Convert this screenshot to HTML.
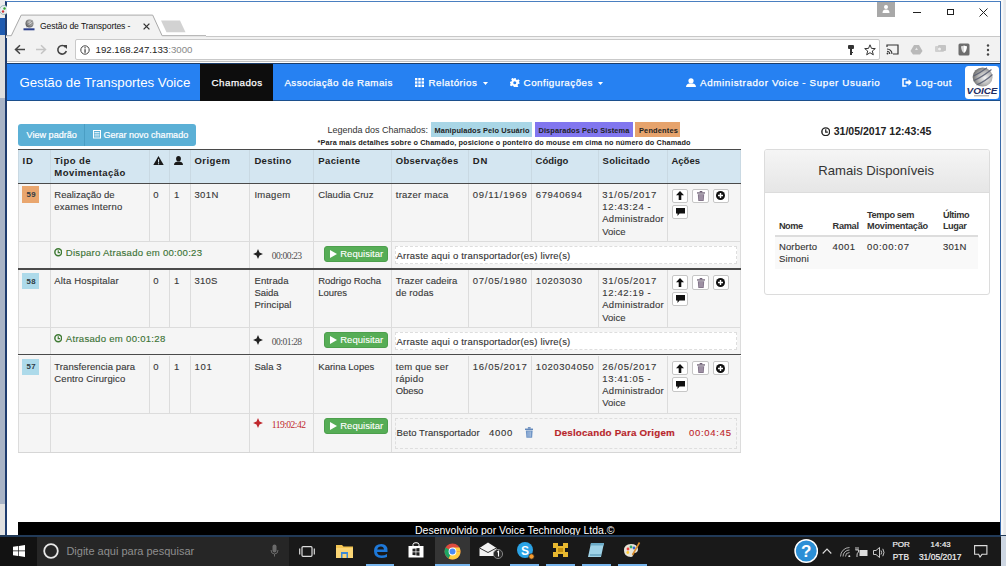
<!DOCTYPE html>
<html><head><meta charset="utf-8">
<style>
*{margin:0;padding:0;box-sizing:border-box}
html,body{width:1006px;height:566px;overflow:hidden;background:#fff;font-family:"Liberation Sans",sans-serif;position:relative}
.a{position:absolute}
.t{position:absolute;white-space:nowrap;line-height:1}
/* desktop strips */
#deskr{left:1001px;top:0;width:5px;height:536px;background:#eceef0;border-left:2px solid #f8f8f8;border-right:2px solid #e6e8ea}
/* window */
#win{left:5px;top:1px;width:996px;height:535px;background:#fff;border:1px solid #4a7fc0;border-left:2px solid #1f3c6e;border-right:1.5px solid #3a6aa8;border-bottom:none}
#tabbar{left:7px;top:2px;width:993px;height:34px;background:#fff}
#toolbar{left:7px;top:36px;width:993px;height:26px;background:#f2f2f2;border-top:1px solid #c8c8c8;border-bottom:1px solid #c0c0c0}
#addr{left:75px;top:39px;width:805px;height:21px;background:#fff;border:1px solid #c9c9c9;border-radius:2px}
/* nav */
#nav{left:7px;top:63px;width:993px;height:38px;background:#2681f2;border-top:1px solid #1b3d6a;border-bottom:1px solid #1c4f8c}
/* content */
/* footer */
#foot{left:18px;top:521.7px;width:982px;height:14px;background:#000}
</style></head><body>
<div class="a" style="left:0;top:0;width:6px;height:18.3px;background:#ececec"></div>
<div class="a" style="left:0;top:18.3px;width:6px;height:16.4px;background:#1f5bb0"></div>
<div class="a" style="left:0;top:34.7px;width:6px;height:63.6px;background:#dedede"></div>
<div class="a" style="left:0;top:98.3px;width:6px;height:405.7px;background:#a9b4c6"></div>
<div class="a" style="left:0;top:504px;width:6px;height:32px;background:#e0e0e0"></div>
<div class="a" id="deskr"></div>
<div class="a" id="win"></div>
<div class="a" id="tabbar"></div>
<div class="a" id="toolbar"></div>
<div class="a" id="addr"></div>

<!-- tab -->
<svg class="a" style="left:6px;top:14px" width="200" height="24" viewBox="0 0 200 24">
<path d="M0 21.7 L5.3 21.7 L15.2 1.1 L146.7 1.1 L156.1 21.7 L200 21.7 L200 24 L0 24 Z" fill="#f2f2f2"/>
<path d="M0 21.7 L5.3 21.7 L15.2 1.1 L146.7 1.1 L156.1 21.7 L200 21.7" fill="none" stroke="#a9a9a9" stroke-width="1"/>
<path d="M155 6.4 L174 6.4 L179.5 18.3 L160.5 18.3 Z" fill="#d2d2d2"/>
</svg>
<svg class="a" style="left:22px;top:19px" width="14" height="13" viewBox="0 0 14 13">
<defs><radialGradient id="fav" cx="0.6" cy="0.4" r="0.7"><stop offset="0" stop-color="#e8e8e8"/><stop offset="0.5" stop-color="#9a9a9a"/><stop offset="1" stop-color="#404040"/></radialGradient></defs>
<circle cx="7.5" cy="4.6" r="4" fill="url(#fav)"/><path d="M4 6 Q7.5 4.5 10.5 1.8 M4.5 8 Q8 6.5 11 3.8" stroke="#666" stroke-width="0.6" fill="none"/>
<rect x="1.5" y="9.3" width="11" height="2" fill="#2b3f8a"/>
</svg>
<div class="t" style="left:40px;top:22.2px;font-size:8.6px;color:#111;letter-spacing:-0.1px">Gestão de Transportes -</div>
<svg class="a" style="left:142.7px;top:22.8px" width="7" height="7" viewBox="0 0 7 7"><path d="M0.6 0.6 L6.4 6.4 M6.4 0.6 L0.6 6.4" stroke="#333" stroke-width="1.3"/></svg>
<!-- profile + window controls -->
<div class="a" style="left:877px;top:2px;width:17.5px;height:14.5px;background:#a8a8a8"></div>
<svg class="a" style="left:881px;top:4px" width="10" height="10" viewBox="0 0 10 10"><circle cx="5" cy="3" r="2" fill="#fff"/><path d="M1.5 9 Q1.5 5.6 5 5.6 Q8.5 5.6 8.5 9Z" fill="#fff"/></svg>
<div class="a" style="left:913px;top:12px;width:7.5px;height:1px;background:#222"></div>
<div class="a" style="left:946.5px;top:8.7px;width:7.2px;height:6.8px;border:1px solid #222"></div>
<svg class="a" style="left:979px;top:8px" width="9" height="9" viewBox="0 0 9 9"><path d="M0.5 0.5 L8.5 8.5 M8.5 0.5 L0.5 8.5" stroke="#222" stroke-width="1"/></svg>
<!-- toolbar icons -->
<svg class="a" style="left:14px;top:44px" width="12" height="11" viewBox="0 0 12 11"><path d="M11 5.5 H2 M6 1.2 L1.5 5.5 L6 9.8" stroke="#444" stroke-width="1.5" fill="none"/></svg>
<svg class="a" style="left:35px;top:44px" width="12" height="11" viewBox="0 0 12 11"><path d="M1 5.5 H10 M6 1.2 L10.5 5.5 L6 9.8" stroke="#c4c4c4" stroke-width="1.5" fill="none"/></svg>
<svg class="a" style="left:56px;top:44px" width="12" height="12" viewBox="0 0 12 12"><path d="M9.6 3.2 A4.3 4.3 0 1 0 10.3 7" stroke="#444" stroke-width="1.6" fill="none"/><path d="M7 1 L11 1 L11 5 Z" fill="#444"/></svg>
<svg class="a" style="left:80px;top:44.5px" width="10" height="10" viewBox="0 0 10 10"><circle cx="5" cy="5" r="4.2" stroke="#444" stroke-width="1" fill="none"/><rect x="4.4" y="4.2" width="1.3" height="3.6" fill="#444"/><rect x="4.4" y="2.2" width="1.3" height="1.2" fill="#444"/></svg>
<div class="t" style="left:95.5px;top:45px;font-size:9.7px;color:#222">192.168.247.133<span style="color:#888">:3000</span></div>
<svg class="a" style="left:846px;top:44px" width="10" height="12" viewBox="0 0 10 12"><rect x="2" y="1" width="6" height="4" rx="1" fill="#333"/><rect x="4" y="5" width="2" height="6" fill="#333"/><rect x="5" y="8" width="2" height="1" fill="#333"/></svg>
<svg class="a" style="left:864px;top:44px" width="12" height="12" viewBox="0 0 12 12"><path d="M6 0.8 L7.5 4.4 L11.3 4.6 L8.3 7 L9.3 10.8 L6 8.7 L2.7 10.8 L3.7 7 L0.7 4.6 L4.5 4.4 Z" stroke="#333" stroke-width="1" fill="none"/></svg>
<svg class="a" style="left:886px;top:44px" width="13" height="11" viewBox="0 0 13 11"><path d="M1 3 V1 H12 V10 H7" stroke="#333" stroke-width="1.2" fill="none"/><path d="M1 5 A5 5 0 0 1 6 10 M1 7.2 A2.8 2.8 0 0 1 3.8 10" stroke="#333" stroke-width="1.1" fill="none"/><circle cx="1.5" cy="9.5" r="0.9" fill="#333"/></svg>
<svg class="a" style="left:910px;top:44px" width="13" height="11" viewBox="0 0 13 11"><path d="M4 1 H9 L12.5 7 L10 10.5 H3 L0.5 7 Z" fill="#b9b9b9"/><path d="M5 6 L6.5 3.5 L8 6Z" fill="#e6e6e6"/></svg>
<svg class="a" style="left:934px;top:44px" width="13" height="11" viewBox="0 0 13 11"><rect x="1" y="2" width="9" height="6" rx="1" fill="#d0d0d0"/><rect x="4" y="1" width="8" height="6" rx="1" fill="#c4c4c4"/><circle cx="5.5" cy="5" r="1.5" fill="#f0f0f0"/></svg>
<svg class="a" style="left:958px;top:43px" width="12" height="13" viewBox="0 0 12 13"><rect x="0.5" y="0.5" width="11" height="12" rx="1.5" fill="#6d6d6d"/><path d="M6 2.5 Q8 3.5 9 3.2 Q9 8 6 10 Z" fill="#fff"/><path d="M6 2.5 Q4 3.5 3 3.2 Q3 8 6 10 Z" fill="#ddd"/></svg>
<svg class="a" style="left:986px;top:44px" width="4" height="12" viewBox="0 0 4 12"><circle cx="2" cy="1.5" r="1.2" fill="#444"/><circle cx="2" cy="6" r="1.2" fill="#444"/><circle cx="2" cy="10.5" r="1.2" fill="#444"/></svg>
<!-- desktop icon -->
<svg class="a" style="left:0;top:4px" width="7" height="12" viewBox="0 0 7 12"><circle cx="4" cy="6" r="4.5" fill="#e8eef0" stroke="#8aa" stroke-width="0.8"/><circle cx="4.5" cy="4.5" r="1.2" fill="#3a3"/><circle cx="3" cy="7.5" r="1.2" fill="#c33"/></svg>
<div class="a" id="nav"></div>

<div class="t" style="left:19.40px;top:76.08px;font-size:13.26px;color:#fff;font-weight:normal;font-family:'Liberation Sans',sans-serif;">Gestão de Transportes Voice</div>
<div class="a" style="left:200.30px;top:64.00px;width:72.50px;height:37.00px;background:#0d0d0d;"></div>
<div class="t" style="left:211.60px;top:78.30px;font-size:9.80px;color:#fff;font-weight:normal;font-family:'Liberation Sans',sans-serif;letter-spacing:0.444px;-webkit-text-stroke:0.25px #fff;">Chamados</div>
<div class="t" style="left:284.40px;top:78.30px;font-size:9.80px;color:#fff;font-weight:normal;font-family:'Liberation Sans',sans-serif;letter-spacing:0.438px;-webkit-text-stroke:0.25px #fff;">Associação de Ramais</div>
<svg class="a" style="left:415px;top:78.3px" width="9" height="9" viewBox="0 0 9 9" fill="#fff"><rect x="0" y="0" width="2.4" height="2.4"/><rect x="3.3" y="0" width="2.4" height="2.4"/><rect x="6.6" y="0" width="2.4" height="2.4"/><rect x="0" y="3.3" width="2.4" height="2.4"/><rect x="3.3" y="3.3" width="2.4" height="2.4"/><rect x="6.6" y="3.3" width="2.4" height="2.4"/><rect x="0" y="6.6" width="2.4" height="2.4"/><rect x="3.3" y="6.6" width="2.4" height="2.4"/><rect x="6.6" y="6.6" width="2.4" height="2.4"/></svg>
<div class="t" style="left:428.50px;top:78.30px;font-size:9.80px;color:#fff;font-weight:normal;font-family:'Liberation Sans',sans-serif;letter-spacing:0.465px;-webkit-text-stroke:0.25px #fff;">Relatórios</div>
<svg class="a" style="left:483px;top:81.8px" width="5" height="3" viewBox="0 0 5 3"><path d="M0 0H5L2.5 3Z" fill="#fff"/></svg>
<svg class="a" style="left:510.4px;top:77.8px" width="9.5" height="9.5" viewBox="0 0 10 10"><path fill="#fff" d="M4 0h2l.3 1.5 1.2.6 1.3-.9 1.4 1.4-.9 1.3.6 1.2L10 4v2l-1.5.3-.6 1.2.9 1.3-1.4 1.4-1.3-.9-1.2.6L6 10H4l-.3-1.5-1.2-.6-1.3.9L-.2 7.4l.9-1.3-.6-1.2L0 6V4l1.5-.3.6-1.2-.9-1.3L2.6-.2l1.3.9 1.2-.6Z"/><circle cx="5" cy="5" r="1.6" fill="#2681f2"/></svg>
<div class="t" style="left:523.60px;top:78.30px;font-size:9.80px;color:#fff;font-weight:normal;font-family:'Liberation Sans',sans-serif;letter-spacing:0.467px;-webkit-text-stroke:0.25px #fff;">Configurações</div>
<svg class="a" style="left:598px;top:81.8px" width="5" height="3" viewBox="0 0 5 3"><path d="M0 0H5L2.5 3Z" fill="#fff"/></svg>
<svg class="a" style="left:686.4px;top:77.6px" width="10" height="9.5" viewBox="0 0 10 9.5"><circle cx="5" cy="2.8" r="2.6" fill="#fff"/><path d="M0 9.5 Q0 5.8 3.5 5.6 L6.5 5.6 Q10 5.8 10 9.5Z" fill="#fff"/></svg>
<div class="t" style="left:700.00px;top:78.30px;font-size:9.80px;color:#fff;font-weight:normal;font-family:'Liberation Sans',sans-serif;letter-spacing:0.626px;-webkit-text-stroke:0.25px #fff;">Administrador Voice - Super Usuario</div>
<svg class="a" style="left:902px;top:78.2px" width="10" height="9" viewBox="0 0 10 9"><path d="M4.5 1 H1 V8 H4.5" stroke="#fff" stroke-width="1.6" fill="none"/><path d="M3.5 3.3 H6.5 V1.2 L9.8 4.5 L6.5 7.8 V5.7 H3.5Z" fill="#fff"/></svg>
<div class="t" style="left:915.40px;top:78.30px;font-size:9.80px;color:#fff;font-weight:normal;font-family:'Liberation Sans',sans-serif;letter-spacing:0.477px;-webkit-text-stroke:0.25px #fff;">Log-out</div>
<div class="a" style="left:964.6px;top:65.9px;width:34px;height:33.5px;background:#fff;border-radius:3.5px"></div>
<svg class="a" style="left:964.6px;top:65.9px" width="34" height="33.5" viewBox="0 0 34 33.5">
<defs><radialGradient id="sph" cx="0.62" cy="0.55" r="0.75"><stop offset="0" stop-color="#f4f4f4"/><stop offset="0.45" stop-color="#b8b8b8"/><stop offset="1" stop-color="#4a4a4a"/></radialGradient></defs>
<ellipse cx="17.6" cy="11" rx="10" ry="9.6" fill="url(#sph)"/>
<path d="M9 14.5 Q17 11 26.5 3.5 M8.6 10 Q15 7 22 1.8 M11.5 19 Q20 15.5 27.5 8.5" stroke="#555a70" stroke-width="1.2" fill="none" opacity="0.85"/>
<text x="17" y="28.2" text-anchor="middle" font-family="Liberation Sans" font-weight="bold" font-style="italic" font-size="9.4" fill="#1c2b63" textLength="31" lengthAdjust="spacingAndGlyphs">VOICE</text>
<rect x="9" y="29.3" width="15" height="1" fill="#9a9a9a"/>
</svg>
<div class="a" style="left:18.00px;top:124.00px;width:178.00px;height:21.70px;background:#5bb0d6;border-radius:3px"></div>
<div class="a" style="left:84.20px;top:124.00px;width:1.00px;height:21.70px;background:#4a9ec4;"></div>
<div class="t" style="left:26.50px;top:130.50px;font-size:9.10px;color:#fff;font-weight:normal;font-family:'Liberation Sans',sans-serif;-webkit-text-stroke:0.2px #fff;">View padrão</div>
<svg class="a" style="left:93px;top:130px" width="8" height="8.5" viewBox="0 0 8 8.5"><rect x="0.5" y="0.5" width="7" height="7.5" fill="none" stroke="#fff" stroke-width="1"/><path d="M1.5 2.5H6.5M1.5 4.2H6.5M1.5 5.9H6.5" stroke="#fff" stroke-width="0.8"/></svg>
<div class="t" style="left:103.60px;top:130.58px;font-size:9.00px;color:#fff;font-weight:normal;font-family:'Liberation Sans',sans-serif;-webkit-text-stroke:0.2px #fff;">Gerar novo chamado</div>
<div class="t" style="left:327.50px;top:125.68px;font-size:9.00px;color:#333;font-weight:normal;font-family:'Liberation Sans',sans-serif;">Legenda dos Chamados:</div>
<div class="a" style="left:430.90px;top:122.20px;width:100.90px;height:15.20px;background:#a9d6e6;"></div>
<div class="a" style="left:534.80px;top:122.20px;width:98.00px;height:15.20px;background:#8176ef;"></div>
<div class="a" style="left:635.20px;top:122.20px;width:45.30px;height:15.20px;background:#e6a36c;"></div>
<div class="t" style="left:434.50px;top:127.14px;font-size:7.40px;color:#222;font-weight:bold;font-family:'Liberation Sans',sans-serif;letter-spacing:0.110px;">Manipulados Pelo Usuário</div>
<div class="t" style="left:538.50px;top:127.14px;font-size:7.40px;color:#222;font-weight:bold;font-family:'Liberation Sans',sans-serif;letter-spacing:0.115px;">Disparados Pelo Sistema</div>
<div class="t" style="left:639.00px;top:127.14px;font-size:7.40px;color:#222;font-weight:bold;font-family:'Liberation Sans',sans-serif;letter-spacing:0.181px;">Pendentes</div>
<div class="t" style="left:317.60px;top:139.42px;font-size:7.30px;color:#222;font-weight:bold;font-family:'Liberation Sans',sans-serif;letter-spacing:0.115px;">*Para mais detalhes sobre o Chamado, posicione o ponteiro do mouse em cima no número do Chamado</div>
<div class="a" style="left:18.00px;top:149.00px;width:722.30px;height:33.80px;background:#d4e6f1;"></div>
<div class="a" style="left:18.00px;top:182.80px;width:722.30px;height:269.60px;background:#f5f5f5;"></div>
<div class="a" style="left:17.50px;top:149.00px;width:1.00px;height:33.80px;background:#c9d9e3;"></div>
<div class="a" style="left:49.50px;top:149.00px;width:1.00px;height:33.80px;background:#c9d9e3;"></div>
<div class="a" style="left:148.80px;top:149.00px;width:1.00px;height:33.80px;background:#c9d9e3;"></div>
<div class="a" style="left:168.80px;top:149.00px;width:1.00px;height:33.80px;background:#c9d9e3;"></div>
<div class="a" style="left:190.00px;top:149.00px;width:1.00px;height:33.80px;background:#c9d9e3;"></div>
<div class="a" style="left:249.00px;top:149.00px;width:1.00px;height:33.80px;background:#c9d9e3;"></div>
<div class="a" style="left:312.90px;top:149.00px;width:1.00px;height:33.80px;background:#c9d9e3;"></div>
<div class="a" style="left:391.10px;top:149.00px;width:1.00px;height:33.80px;background:#c9d9e3;"></div>
<div class="a" style="left:468.20px;top:149.00px;width:1.00px;height:33.80px;background:#c9d9e3;"></div>
<div class="a" style="left:531.30px;top:149.00px;width:1.00px;height:33.80px;background:#c9d9e3;"></div>
<div class="a" style="left:597.50px;top:149.00px;width:1.00px;height:33.80px;background:#c9d9e3;"></div>
<div class="a" style="left:667.10px;top:149.00px;width:1.00px;height:33.80px;background:#c9d9e3;"></div>
<div class="a" style="left:739.80px;top:149.00px;width:1.00px;height:33.80px;background:#c9d9e3;"></div>
<div class="a" style="left:17.50px;top:183.50px;width:1.00px;height:58.20px;background:#dcdcdc;"></div>
<div class="a" style="left:49.50px;top:183.50px;width:1.00px;height:58.20px;background:#dcdcdc;"></div>
<div class="a" style="left:148.80px;top:183.50px;width:1.00px;height:58.20px;background:#dcdcdc;"></div>
<div class="a" style="left:168.80px;top:183.50px;width:1.00px;height:58.20px;background:#dcdcdc;"></div>
<div class="a" style="left:190.00px;top:183.50px;width:1.00px;height:58.20px;background:#dcdcdc;"></div>
<div class="a" style="left:249.00px;top:183.50px;width:1.00px;height:58.20px;background:#dcdcdc;"></div>
<div class="a" style="left:312.90px;top:183.50px;width:1.00px;height:58.20px;background:#dcdcdc;"></div>
<div class="a" style="left:391.10px;top:183.50px;width:1.00px;height:58.20px;background:#dcdcdc;"></div>
<div class="a" style="left:468.20px;top:183.50px;width:1.00px;height:58.20px;background:#dcdcdc;"></div>
<div class="a" style="left:531.30px;top:183.50px;width:1.00px;height:58.20px;background:#dcdcdc;"></div>
<div class="a" style="left:597.50px;top:183.50px;width:1.00px;height:58.20px;background:#dcdcdc;"></div>
<div class="a" style="left:667.10px;top:183.50px;width:1.00px;height:58.20px;background:#dcdcdc;"></div>
<div class="a" style="left:739.80px;top:183.50px;width:1.00px;height:58.20px;background:#dcdcdc;"></div>
<div class="a" style="left:17.50px;top:241.70px;width:1.00px;height:27.10px;background:#dcdcdc;"></div>
<div class="a" style="left:49.50px;top:241.70px;width:1.00px;height:27.10px;background:#dcdcdc;"></div>
<div class="a" style="left:249.00px;top:241.70px;width:1.00px;height:27.10px;background:#dcdcdc;"></div>
<div class="a" style="left:312.90px;top:241.70px;width:1.00px;height:27.10px;background:#dcdcdc;"></div>
<div class="a" style="left:391.10px;top:241.70px;width:1.00px;height:27.10px;background:#dcdcdc;"></div>
<div class="a" style="left:739.80px;top:241.70px;width:1.00px;height:27.10px;background:#dcdcdc;"></div>
<div class="a" style="left:18.00px;top:241.20px;width:722.30px;height:1.00px;background:#dcdcdc;"></div>
<div class="a" style="left:17.50px;top:270.30px;width:1.00px;height:57.40px;background:#dcdcdc;"></div>
<div class="a" style="left:49.50px;top:270.30px;width:1.00px;height:57.40px;background:#dcdcdc;"></div>
<div class="a" style="left:148.80px;top:270.30px;width:1.00px;height:57.40px;background:#dcdcdc;"></div>
<div class="a" style="left:168.80px;top:270.30px;width:1.00px;height:57.40px;background:#dcdcdc;"></div>
<div class="a" style="left:190.00px;top:270.30px;width:1.00px;height:57.40px;background:#dcdcdc;"></div>
<div class="a" style="left:249.00px;top:270.30px;width:1.00px;height:57.40px;background:#dcdcdc;"></div>
<div class="a" style="left:312.90px;top:270.30px;width:1.00px;height:57.40px;background:#dcdcdc;"></div>
<div class="a" style="left:391.10px;top:270.30px;width:1.00px;height:57.40px;background:#dcdcdc;"></div>
<div class="a" style="left:468.20px;top:270.30px;width:1.00px;height:57.40px;background:#dcdcdc;"></div>
<div class="a" style="left:531.30px;top:270.30px;width:1.00px;height:57.40px;background:#dcdcdc;"></div>
<div class="a" style="left:597.50px;top:270.30px;width:1.00px;height:57.40px;background:#dcdcdc;"></div>
<div class="a" style="left:667.10px;top:270.30px;width:1.00px;height:57.40px;background:#dcdcdc;"></div>
<div class="a" style="left:739.80px;top:270.30px;width:1.00px;height:57.40px;background:#dcdcdc;"></div>
<div class="a" style="left:17.50px;top:327.70px;width:1.00px;height:26.60px;background:#dcdcdc;"></div>
<div class="a" style="left:49.50px;top:327.70px;width:1.00px;height:26.60px;background:#dcdcdc;"></div>
<div class="a" style="left:249.00px;top:327.70px;width:1.00px;height:26.60px;background:#dcdcdc;"></div>
<div class="a" style="left:312.90px;top:327.70px;width:1.00px;height:26.60px;background:#dcdcdc;"></div>
<div class="a" style="left:391.10px;top:327.70px;width:1.00px;height:26.60px;background:#dcdcdc;"></div>
<div class="a" style="left:739.80px;top:327.70px;width:1.00px;height:26.60px;background:#dcdcdc;"></div>
<div class="a" style="left:18.00px;top:327.20px;width:722.30px;height:1.00px;background:#dcdcdc;"></div>
<div class="a" style="left:17.50px;top:355.80px;width:1.00px;height:57.80px;background:#dcdcdc;"></div>
<div class="a" style="left:49.50px;top:355.80px;width:1.00px;height:57.80px;background:#dcdcdc;"></div>
<div class="a" style="left:148.80px;top:355.80px;width:1.00px;height:57.80px;background:#dcdcdc;"></div>
<div class="a" style="left:168.80px;top:355.80px;width:1.00px;height:57.80px;background:#dcdcdc;"></div>
<div class="a" style="left:190.00px;top:355.80px;width:1.00px;height:57.80px;background:#dcdcdc;"></div>
<div class="a" style="left:249.00px;top:355.80px;width:1.00px;height:57.80px;background:#dcdcdc;"></div>
<div class="a" style="left:312.90px;top:355.80px;width:1.00px;height:57.80px;background:#dcdcdc;"></div>
<div class="a" style="left:391.10px;top:355.80px;width:1.00px;height:57.80px;background:#dcdcdc;"></div>
<div class="a" style="left:468.20px;top:355.80px;width:1.00px;height:57.80px;background:#dcdcdc;"></div>
<div class="a" style="left:531.30px;top:355.80px;width:1.00px;height:57.80px;background:#dcdcdc;"></div>
<div class="a" style="left:597.50px;top:355.80px;width:1.00px;height:57.80px;background:#dcdcdc;"></div>
<div class="a" style="left:667.10px;top:355.80px;width:1.00px;height:57.80px;background:#dcdcdc;"></div>
<div class="a" style="left:739.80px;top:355.80px;width:1.00px;height:57.80px;background:#dcdcdc;"></div>
<div class="a" style="left:17.50px;top:413.60px;width:1.00px;height:38.80px;background:#dcdcdc;"></div>
<div class="a" style="left:49.50px;top:413.60px;width:1.00px;height:38.80px;background:#dcdcdc;"></div>
<div class="a" style="left:249.00px;top:413.60px;width:1.00px;height:38.80px;background:#dcdcdc;"></div>
<div class="a" style="left:312.90px;top:413.60px;width:1.00px;height:38.80px;background:#dcdcdc;"></div>
<div class="a" style="left:391.10px;top:413.60px;width:1.00px;height:38.80px;background:#dcdcdc;"></div>
<div class="a" style="left:739.80px;top:413.60px;width:1.00px;height:38.80px;background:#dcdcdc;"></div>
<div class="a" style="left:18.00px;top:413.10px;width:722.30px;height:1.00px;background:#dcdcdc;"></div>
<div class="a" style="left:18.00px;top:451.90px;width:722.80px;height:1.00px;background:#d6d6d6;"></div>
<div class="a" style="left:18.00px;top:148.70px;width:722.80px;height:1.60px;background:#4a4a4a;"></div>
<div class="a" style="left:18.00px;top:182.60px;width:722.80px;height:1.60px;background:#4a4a4a;"></div>
<div class="a" style="left:18.00px;top:268.10px;width:722.80px;height:1.60px;background:#4a4a4a;"></div>
<div class="a" style="left:18.00px;top:353.60px;width:722.80px;height:1.60px;background:#4a4a4a;"></div>
<div class="t" style="left:22.50px;top:156.36px;font-size:9.50px;color:#222;font-weight:bold;font-family:'Liberation Sans',sans-serif;letter-spacing:0.959px;">ID</div>
<div class="t" style="left:54.30px;top:156.36px;font-size:9.50px;color:#222;font-weight:bold;font-family:'Liberation Sans',sans-serif;letter-spacing:0.446px;">Tipo de</div>
<div class="t" style="left:54.30px;top:168.06px;font-size:9.50px;color:#222;font-weight:bold;font-family:'Liberation Sans',sans-serif;letter-spacing:0.455px;">Movimentação</div>
<div class="t" style="left:194.40px;top:156.36px;font-size:9.50px;color:#222;font-weight:bold;font-family:'Liberation Sans',sans-serif;letter-spacing:0.468px;">Origem</div>
<div class="t" style="left:254.40px;top:156.36px;font-size:9.50px;color:#222;font-weight:bold;font-family:'Liberation Sans',sans-serif;letter-spacing:0.327px;">Destino</div>
<div class="t" style="left:318.30px;top:156.36px;font-size:9.50px;color:#222;font-weight:bold;font-family:'Liberation Sans',sans-serif;letter-spacing:0.375px;">Paciente</div>
<div class="t" style="left:395.80px;top:156.36px;font-size:9.50px;color:#222;font-weight:bold;font-family:'Liberation Sans',sans-serif;letter-spacing:0.272px;">Observações</div>
<div class="t" style="left:472.80px;top:156.36px;font-size:9.50px;color:#222;font-weight:bold;font-family:'Liberation Sans',sans-serif;letter-spacing:0.782px;">DN</div>
<div class="t" style="left:535.50px;top:156.36px;font-size:9.50px;color:#222;font-weight:bold;font-family:'Liberation Sans',sans-serif;letter-spacing:0.018px;">Código</div>
<div class="t" style="left:602.60px;top:156.36px;font-size:9.50px;color:#222;font-weight:bold;font-family:'Liberation Sans',sans-serif;letter-spacing:0.201px;">Solicitado</div>
<div class="t" style="left:671.40px;top:156.36px;font-size:9.50px;color:#222;font-weight:bold;font-family:'Liberation Sans',sans-serif;letter-spacing:0.021px;">Ações</div>
<svg class="a" style="left:153px;top:155.5px" width="11" height="9.5" viewBox="0 0 11 9.5"><path d="M5.5 0 L11 9.5 H0 Z" fill="#1a1a1a"/><rect x="5" y="3.2" width="1.1" height="3.3" fill="#d4e6f1"/><rect x="5" y="7.2" width="1.1" height="1.1" fill="#d4e6f1"/></svg>
<svg class="a" style="left:174px;top:155.5px" width="9" height="9.5" viewBox="0 0 9 9.5"><ellipse cx="4.5" cy="2.8" rx="2.4" ry="2.8" fill="#1a1a1a"/><path d="M0 9.5 Q0 6 3 5.8 H6 Q9 6 9 9.5Z" fill="#1a1a1a"/></svg>
<div class="a" style="left:22.20px;top:186.40px;width:16.70px;height:16.20px;background:#e9a66e;"></div>
<div class="t" style="left:26.40px;top:190.80px;font-size:7.80px;color:#2e3a44;font-weight:bold;font-family:'Liberation Sans',sans-serif;letter-spacing:0.508px;">59</div>
<div class="t" style="left:54.30px;top:189.96px;font-size:9.50px;color:#383838;font-weight:normal;font-family:'Liberation Sans',sans-serif;letter-spacing:-0.005px;-webkit-text-stroke:0.12px #383838;">Realização de</div>
<div class="t" style="left:54.30px;top:202.21px;font-size:9.50px;color:#383838;font-weight:normal;font-family:'Liberation Sans',sans-serif;letter-spacing:0.187px;-webkit-text-stroke:0.12px #383838;">exames Interno</div>
<div class="t" style="left:153.30px;top:189.96px;font-size:9.50px;color:#383838;font-weight:normal;font-family:'Liberation Sans',sans-serif;letter-spacing:0.000px;-webkit-text-stroke:0.12px #383838;">0</div>
<div class="t" style="left:174.00px;top:189.96px;font-size:9.50px;color:#383838;font-weight:normal;font-family:'Liberation Sans',sans-serif;letter-spacing:0.000px;-webkit-text-stroke:0.12px #383838;">1</div>
<div class="t" style="left:194.40px;top:189.96px;font-size:9.50px;color:#383838;font-weight:normal;font-family:'Liberation Sans',sans-serif;letter-spacing:0.384px;-webkit-text-stroke:0.12px #383838;">301N</div>
<div class="t" style="left:254.40px;top:189.96px;font-size:9.50px;color:#383838;font-weight:normal;font-family:'Liberation Sans',sans-serif;letter-spacing:0.281px;-webkit-text-stroke:0.12px #383838;">Imagem</div>
<div class="t" style="left:318.30px;top:189.96px;font-size:9.50px;color:#383838;font-weight:normal;font-family:'Liberation Sans',sans-serif;letter-spacing:0.018px;-webkit-text-stroke:0.12px #383838;">Claudia Cruz</div>
<div class="t" style="left:395.80px;top:189.96px;font-size:9.50px;color:#383838;font-weight:normal;font-family:'Liberation Sans',sans-serif;letter-spacing:0.235px;-webkit-text-stroke:0.12px #383838;">trazer maca</div>
<div class="t" style="left:472.80px;top:189.96px;font-size:9.50px;color:#383838;font-weight:normal;font-family:'Liberation Sans',sans-serif;letter-spacing:0.789px;-webkit-text-stroke:0.12px #383838;">09/11/1969</div>
<div class="t" style="left:535.80px;top:189.96px;font-size:9.50px;color:#383838;font-weight:normal;font-family:'Liberation Sans',sans-serif;letter-spacing:0.573px;-webkit-text-stroke:0.12px #383838;">67940694</div>
<div class="t" style="left:602.30px;top:189.96px;font-size:9.50px;color:#383838;font-weight:normal;font-family:'Liberation Sans',sans-serif;letter-spacing:0.711px;-webkit-text-stroke:0.12px #383838;">31/05/2017</div>
<div class="t" style="left:602.30px;top:202.21px;font-size:9.50px;color:#383838;font-weight:normal;font-family:'Liberation Sans',sans-serif;letter-spacing:0.633px;-webkit-text-stroke:0.12px #383838;">12:43:24 -</div>
<div class="t" style="left:602.30px;top:214.46px;font-size:9.50px;color:#383838;font-weight:normal;font-family:'Liberation Sans',sans-serif;letter-spacing:0.234px;-webkit-text-stroke:0.12px #383838;">Administrador</div>
<div class="t" style="left:602.30px;top:226.71px;font-size:9.50px;color:#383838;font-weight:normal;font-family:'Liberation Sans',sans-serif;letter-spacing:-0.022px;-webkit-text-stroke:0.12px #383838;">Voice</div>
<div class="a" style="left:671.70px;top:188.50px;width:16.70px;height:14.60px;background:#fff;border:1px solid #c6c6c6;border-radius:2px;box-sizing:border-box"></div>
<svg class="a" style="left:676.05px;top:191.30px" width="8" height="9" viewBox="0 0 8 9"><path d="M4 0 L8 4.2 H5.3 V9 H2.7 V4.2 H0 Z" fill="#111"/></svg>
<div class="a" style="left:692.30px;top:188.50px;width:16.70px;height:14.60px;background:#fff;border:1px solid #c6c6c6;border-radius:2px;box-sizing:border-box"></div>
<svg class="a" style="left:696.65px;top:190.80px" width="8" height="10" viewBox="0 0 8 10"><rect x="0" y="1.3" width="8" height="1.3" fill="#6e6075"/><rect x="2.7" y="0" width="2.6" height="1.3" fill="#6e6075"/><path d="M0.8 3.2 H7.2 L6.7 10 H1.3 Z" fill="#85778c"/><path d="M2.8 4 V9 M4 4 V9 M5.2 4 V9" stroke="#c9bfcc" stroke-width="0.5"/></svg>
<div class="a" style="left:712.50px;top:188.50px;width:16.70px;height:14.60px;background:#fff;border:1px solid #c6c6c6;border-radius:2px;box-sizing:border-box"></div>
<svg class="a" style="left:716.35px;top:191.30px" width="9" height="9" viewBox="0 0 9 9"><circle cx="4.5" cy="4.5" r="4.5" fill="#111"/><path d="M4.5 2 V7 M2 4.5 H7" stroke="#fff" stroke-width="1.4"/></svg>
<div class="a" style="left:671.70px;top:204.90px;width:16.70px;height:14.60px;background:#fff;border:1px solid #c6c6c6;border-radius:2px;box-sizing:border-box"></div>
<svg class="a" style="left:675.55px;top:208.20px" width="9" height="8" viewBox="0 0 9 8"><path d="M0 0 H9 V5.5 H3.5 L1.5 8 V5.5 H0 Z" fill="#111"/></svg>
<svg class="a" style="left:53.9px;top:248.20px" width="8.5" height="8.5" viewBox="0 0 8 8"><circle cx="4" cy="4" r="3.2" fill="none" stroke="#3f7a34" stroke-width="1.4"/><path d="M4 2 V4.3 H5.8" stroke="#3f7a34" stroke-width="1.1" fill="none"/></svg>
<div class="t" style="left:65.80px;top:247.87px;font-size:9.60px;color:#3a7234;font-weight:normal;font-family:'Liberation Sans',sans-serif;letter-spacing:0.245px;-webkit-text-stroke:0.12px #3a7234;">Disparo Atrasado em 00:00:23</div>
<div class="a" style="left:395.30px;top:246.30px;width:341.50px;height:18.20px;background:#fff;border:1px dashed #dedede;box-sizing:border-box"></div>
<div class="t" style="left:396.50px;top:251.16px;font-size:9.50px;color:#333;font-weight:normal;font-family:'Liberation Sans',sans-serif;letter-spacing:0.200px;-webkit-text-stroke:0.12px #333;">Arraste aqui o transportador(es) livre(s)</div>
<svg class="a" style="left:253.3px;top:249.30px" width="10" height="10" viewBox="0 0 10 10"><path d="M5 0 L6.5 3.5 L10 5 L6.5 6.5 L5 10 L3.5 6.5 L0 5 L3.5 3.5 Z" fill="#222"/></svg>
<div class="t" style="left:271.80px;top:250.56px;font-size:9.60px;color:#505050;font-weight:normal;font-family:'Liberation Serif',serif;letter-spacing:-0.55px;">00:00:23</div>
<div class="a" style="left:323.70px;top:246.10px;width:63.90px;height:16.10px;background:#56ad56;border-radius:3px;border:1px solid #4c9f4c;box-sizing:border-box"></div>
<svg class="a" style="left:329.5px;top:250.30px" width="7" height="8" viewBox="0 0 7 8"><path d="M0 0 L7 4 L0 8Z" fill="#fff"/></svg>
<div class="t" style="left:340.20px;top:249.36px;font-size:9.50px;color:#fff;font-weight:normal;font-family:'Liberation Sans',sans-serif;letter-spacing:0.026px;-webkit-text-stroke:0.1px #fff;">Requisitar</div>
<div class="a" style="left:22.20px;top:273.20px;width:16.70px;height:16.20px;background:#addaea;"></div>
<div class="t" style="left:26.40px;top:277.60px;font-size:7.80px;color:#2e3a44;font-weight:bold;font-family:'Liberation Sans',sans-serif;letter-spacing:0.508px;">58</div>
<div class="t" style="left:54.30px;top:275.76px;font-size:9.50px;color:#383838;font-weight:normal;font-family:'Liberation Sans',sans-serif;letter-spacing:0.179px;-webkit-text-stroke:0.12px #383838;">Alta Hospitalar</div>
<div class="t" style="left:153.30px;top:275.76px;font-size:9.50px;color:#383838;font-weight:normal;font-family:'Liberation Sans',sans-serif;letter-spacing:0.000px;-webkit-text-stroke:0.12px #383838;">0</div>
<div class="t" style="left:174.00px;top:275.76px;font-size:9.50px;color:#383838;font-weight:normal;font-family:'Liberation Sans',sans-serif;letter-spacing:0.000px;-webkit-text-stroke:0.12px #383838;">1</div>
<div class="t" style="left:194.40px;top:275.76px;font-size:9.50px;color:#383838;font-weight:normal;font-family:'Liberation Sans',sans-serif;letter-spacing:0.230px;-webkit-text-stroke:0.12px #383838;">310S</div>
<div class="t" style="left:254.40px;top:275.76px;font-size:9.50px;color:#383838;font-weight:normal;font-family:'Liberation Sans',sans-serif;letter-spacing:0.152px;-webkit-text-stroke:0.12px #383838;">Entrada</div>
<div class="t" style="left:254.40px;top:288.01px;font-size:9.50px;color:#383838;font-weight:normal;font-family:'Liberation Sans',sans-serif;letter-spacing:-0.043px;-webkit-text-stroke:0.12px #383838;">Saida</div>
<div class="t" style="left:254.40px;top:300.26px;font-size:9.50px;color:#383838;font-weight:normal;font-family:'Liberation Sans',sans-serif;letter-spacing:0.080px;-webkit-text-stroke:0.12px #383838;">Principal</div>
<div class="t" style="left:318.30px;top:275.76px;font-size:9.50px;color:#383838;font-weight:normal;font-family:'Liberation Sans',sans-serif;letter-spacing:-0.055px;-webkit-text-stroke:0.12px #383838;">Rodrigo Rocha</div>
<div class="t" style="left:318.30px;top:288.01px;font-size:9.50px;color:#383838;font-weight:normal;font-family:'Liberation Sans',sans-serif;letter-spacing:-0.049px;-webkit-text-stroke:0.12px #383838;">Loures</div>
<div class="t" style="left:395.80px;top:275.76px;font-size:9.50px;color:#383838;font-weight:normal;font-family:'Liberation Sans',sans-serif;letter-spacing:0.048px;-webkit-text-stroke:0.12px #383838;">Trazer cadeira</div>
<div class="t" style="left:395.80px;top:288.01px;font-size:9.50px;color:#383838;font-weight:normal;font-family:'Liberation Sans',sans-serif;letter-spacing:0.109px;-webkit-text-stroke:0.12px #383838;">de rodas</div>
<div class="t" style="left:472.80px;top:275.76px;font-size:9.50px;color:#383838;font-weight:normal;font-family:'Liberation Sans',sans-serif;letter-spacing:0.711px;-webkit-text-stroke:0.12px #383838;">07/05/1980</div>
<div class="t" style="left:535.80px;top:275.76px;font-size:9.50px;color:#383838;font-weight:normal;font-family:'Liberation Sans',sans-serif;letter-spacing:0.573px;-webkit-text-stroke:0.12px #383838;">10203030</div>
<div class="t" style="left:602.30px;top:275.76px;font-size:9.50px;color:#383838;font-weight:normal;font-family:'Liberation Sans',sans-serif;letter-spacing:0.711px;-webkit-text-stroke:0.12px #383838;">31/05/2017</div>
<div class="t" style="left:602.30px;top:288.01px;font-size:9.50px;color:#383838;font-weight:normal;font-family:'Liberation Sans',sans-serif;letter-spacing:0.633px;-webkit-text-stroke:0.12px #383838;">12:42:19 -</div>
<div class="t" style="left:602.30px;top:300.26px;font-size:9.50px;color:#383838;font-weight:normal;font-family:'Liberation Sans',sans-serif;letter-spacing:0.234px;-webkit-text-stroke:0.12px #383838;">Administrador</div>
<div class="t" style="left:602.30px;top:312.51px;font-size:9.50px;color:#383838;font-weight:normal;font-family:'Liberation Sans',sans-serif;letter-spacing:-0.022px;-webkit-text-stroke:0.12px #383838;">Voice</div>
<div class="a" style="left:671.70px;top:275.30px;width:16.70px;height:14.60px;background:#fff;border:1px solid #c6c6c6;border-radius:2px;box-sizing:border-box"></div>
<svg class="a" style="left:676.05px;top:278.10px" width="8" height="9" viewBox="0 0 8 9"><path d="M4 0 L8 4.2 H5.3 V9 H2.7 V4.2 H0 Z" fill="#111"/></svg>
<div class="a" style="left:692.30px;top:275.30px;width:16.70px;height:14.60px;background:#fff;border:1px solid #c6c6c6;border-radius:2px;box-sizing:border-box"></div>
<svg class="a" style="left:696.65px;top:277.60px" width="8" height="10" viewBox="0 0 8 10"><rect x="0" y="1.3" width="8" height="1.3" fill="#6e6075"/><rect x="2.7" y="0" width="2.6" height="1.3" fill="#6e6075"/><path d="M0.8 3.2 H7.2 L6.7 10 H1.3 Z" fill="#85778c"/><path d="M2.8 4 V9 M4 4 V9 M5.2 4 V9" stroke="#c9bfcc" stroke-width="0.5"/></svg>
<div class="a" style="left:712.50px;top:275.30px;width:16.70px;height:14.60px;background:#fff;border:1px solid #c6c6c6;border-radius:2px;box-sizing:border-box"></div>
<svg class="a" style="left:716.35px;top:278.10px" width="9" height="9" viewBox="0 0 9 9"><circle cx="4.5" cy="4.5" r="4.5" fill="#111"/><path d="M4.5 2 V7 M2 4.5 H7" stroke="#fff" stroke-width="1.4"/></svg>
<div class="a" style="left:671.70px;top:291.70px;width:16.70px;height:14.60px;background:#fff;border:1px solid #c6c6c6;border-radius:2px;box-sizing:border-box"></div>
<svg class="a" style="left:675.55px;top:295.00px" width="9" height="8" viewBox="0 0 9 8"><path d="M0 0 H9 V5.5 H3.5 L1.5 8 V5.5 H0 Z" fill="#111"/></svg>
<svg class="a" style="left:53.9px;top:334.20px" width="8.5" height="8.5" viewBox="0 0 8 8"><circle cx="4" cy="4" r="3.2" fill="none" stroke="#3f7a34" stroke-width="1.4"/><path d="M4 2 V4.3 H5.8" stroke="#3f7a34" stroke-width="1.1" fill="none"/></svg>
<div class="t" style="left:65.80px;top:333.87px;font-size:9.60px;color:#3a7234;font-weight:normal;font-family:'Liberation Sans',sans-serif;letter-spacing:0.265px;-webkit-text-stroke:0.12px #3a7234;">Atrasado em 00:01:28</div>
<div class="a" style="left:395.30px;top:332.30px;width:341.50px;height:18.20px;background:#fff;border:1px dashed #dedede;box-sizing:border-box"></div>
<div class="t" style="left:396.50px;top:337.16px;font-size:9.50px;color:#333;font-weight:normal;font-family:'Liberation Sans',sans-serif;letter-spacing:0.200px;-webkit-text-stroke:0.12px #333;">Arraste aqui o transportador(es) livre(s)</div>
<svg class="a" style="left:253.3px;top:335.30px" width="10" height="10" viewBox="0 0 10 10"><path d="M5 0 L6.5 3.5 L10 5 L6.5 6.5 L5 10 L3.5 6.5 L0 5 L3.5 3.5 Z" fill="#222"/></svg>
<div class="t" style="left:271.80px;top:336.56px;font-size:9.60px;color:#505050;font-weight:normal;font-family:'Liberation Serif',serif;letter-spacing:-0.55px;">00:01:28</div>
<div class="a" style="left:323.70px;top:332.10px;width:63.90px;height:16.10px;background:#56ad56;border-radius:3px;border:1px solid #4c9f4c;box-sizing:border-box"></div>
<svg class="a" style="left:329.5px;top:336.30px" width="7" height="8" viewBox="0 0 7 8"><path d="M0 0 L7 4 L0 8Z" fill="#fff"/></svg>
<div class="t" style="left:340.20px;top:335.36px;font-size:9.50px;color:#fff;font-weight:normal;font-family:'Liberation Sans',sans-serif;letter-spacing:0.026px;-webkit-text-stroke:0.1px #fff;">Requisitar</div>
<div class="a" style="left:22.20px;top:358.70px;width:16.70px;height:16.20px;background:#addaea;"></div>
<div class="t" style="left:26.40px;top:363.10px;font-size:7.80px;color:#2e3a44;font-weight:bold;font-family:'Liberation Sans',sans-serif;letter-spacing:0.508px;">57</div>
<div class="t" style="left:54.30px;top:361.56px;font-size:9.50px;color:#383838;font-weight:normal;font-family:'Liberation Sans',sans-serif;letter-spacing:0.079px;-webkit-text-stroke:0.12px #383838;">Transferencia para</div>
<div class="t" style="left:54.30px;top:373.81px;font-size:9.50px;color:#383838;font-weight:normal;font-family:'Liberation Sans',sans-serif;letter-spacing:0.114px;-webkit-text-stroke:0.12px #383838;">Centro Cirurgico</div>
<div class="t" style="left:153.30px;top:361.56px;font-size:9.50px;color:#383838;font-weight:normal;font-family:'Liberation Sans',sans-serif;letter-spacing:0.000px;-webkit-text-stroke:0.12px #383838;">0</div>
<div class="t" style="left:174.00px;top:361.56px;font-size:9.50px;color:#383838;font-weight:normal;font-family:'Liberation Sans',sans-serif;letter-spacing:0.000px;-webkit-text-stroke:0.12px #383838;">1</div>
<div class="t" style="left:194.40px;top:361.56px;font-size:9.50px;color:#383838;font-weight:normal;font-family:'Liberation Sans',sans-serif;letter-spacing:0.753px;-webkit-text-stroke:0.12px #383838;">101</div>
<div class="t" style="left:254.40px;top:361.56px;font-size:9.50px;color:#383838;font-weight:normal;font-family:'Liberation Sans',sans-serif;letter-spacing:0.043px;-webkit-text-stroke:0.12px #383838;">Sala 3</div>
<div class="t" style="left:318.30px;top:361.56px;font-size:9.50px;color:#383838;font-weight:normal;font-family:'Liberation Sans',sans-serif;letter-spacing:-0.007px;-webkit-text-stroke:0.12px #383838;">Karina Lopes</div>
<div class="t" style="left:395.80px;top:361.56px;font-size:9.50px;color:#383838;font-weight:normal;font-family:'Liberation Sans',sans-serif;letter-spacing:0.246px;-webkit-text-stroke:0.12px #383838;">tem que ser</div>
<div class="t" style="left:395.80px;top:373.81px;font-size:9.50px;color:#383838;font-weight:normal;font-family:'Liberation Sans',sans-serif;letter-spacing:0.257px;-webkit-text-stroke:0.12px #383838;">rápido</div>
<div class="t" style="left:395.80px;top:386.06px;font-size:9.50px;color:#383838;font-weight:normal;font-family:'Liberation Sans',sans-serif;letter-spacing:-0.103px;-webkit-text-stroke:0.12px #383838;">Obeso</div>
<div class="t" style="left:472.80px;top:361.56px;font-size:9.50px;color:#383838;font-weight:normal;font-family:'Liberation Sans',sans-serif;letter-spacing:0.711px;-webkit-text-stroke:0.12px #383838;">16/05/2017</div>
<div class="t" style="left:535.80px;top:361.56px;font-size:9.50px;color:#383838;font-weight:normal;font-family:'Liberation Sans',sans-serif;letter-spacing:0.558px;-webkit-text-stroke:0.12px #383838;">1020304050</div>
<div class="t" style="left:602.30px;top:361.56px;font-size:9.50px;color:#383838;font-weight:normal;font-family:'Liberation Sans',sans-serif;letter-spacing:0.711px;-webkit-text-stroke:0.12px #383838;">26/05/2017</div>
<div class="t" style="left:602.30px;top:373.81px;font-size:9.50px;color:#383838;font-weight:normal;font-family:'Liberation Sans',sans-serif;letter-spacing:0.633px;-webkit-text-stroke:0.12px #383838;">13:41:05 -</div>
<div class="t" style="left:602.30px;top:386.06px;font-size:9.50px;color:#383838;font-weight:normal;font-family:'Liberation Sans',sans-serif;letter-spacing:0.234px;-webkit-text-stroke:0.12px #383838;">Administrador</div>
<div class="t" style="left:602.30px;top:398.31px;font-size:9.50px;color:#383838;font-weight:normal;font-family:'Liberation Sans',sans-serif;letter-spacing:-0.022px;-webkit-text-stroke:0.12px #383838;">Voice</div>
<div class="a" style="left:671.70px;top:360.80px;width:16.70px;height:14.60px;background:#fff;border:1px solid #c6c6c6;border-radius:2px;box-sizing:border-box"></div>
<svg class="a" style="left:676.05px;top:363.60px" width="8" height="9" viewBox="0 0 8 9"><path d="M4 0 L8 4.2 H5.3 V9 H2.7 V4.2 H0 Z" fill="#111"/></svg>
<div class="a" style="left:692.30px;top:360.80px;width:16.70px;height:14.60px;background:#fff;border:1px solid #c6c6c6;border-radius:2px;box-sizing:border-box"></div>
<svg class="a" style="left:696.65px;top:363.10px" width="8" height="10" viewBox="0 0 8 10"><rect x="0" y="1.3" width="8" height="1.3" fill="#6e6075"/><rect x="2.7" y="0" width="2.6" height="1.3" fill="#6e6075"/><path d="M0.8 3.2 H7.2 L6.7 10 H1.3 Z" fill="#85778c"/><path d="M2.8 4 V9 M4 4 V9 M5.2 4 V9" stroke="#c9bfcc" stroke-width="0.5"/></svg>
<div class="a" style="left:712.50px;top:360.80px;width:16.70px;height:14.60px;background:#fff;border:1px solid #c6c6c6;border-radius:2px;box-sizing:border-box"></div>
<svg class="a" style="left:716.35px;top:363.60px" width="9" height="9" viewBox="0 0 9 9"><circle cx="4.5" cy="4.5" r="4.5" fill="#111"/><path d="M4.5 2 V7 M2 4.5 H7" stroke="#fff" stroke-width="1.4"/></svg>
<div class="a" style="left:671.70px;top:377.20px;width:16.70px;height:14.60px;background:#fff;border:1px solid #c6c6c6;border-radius:2px;box-sizing:border-box"></div>
<svg class="a" style="left:675.55px;top:380.50px" width="9" height="8" viewBox="0 0 9 8"><path d="M0 0 H9 V5.5 H3.5 L1.5 8 V5.5 H0 Z" fill="#111"/></svg>
<div class="a" style="left:395.30px;top:418.20px;width:341.30px;height:30.40px;background:#f5f5f5;border:1px dashed #dedede;box-sizing:border-box"></div>
<div class="t" style="left:396.60px;top:428.46px;font-size:9.50px;color:#333;font-weight:normal;font-family:'Liberation Sans',sans-serif;letter-spacing:0.098px;-webkit-text-stroke:0.12px #333;">Beto Transportador</div>
<div class="t" style="left:489.00px;top:428.46px;font-size:9.50px;color:#333;font-weight:normal;font-family:'Liberation Sans',sans-serif;letter-spacing:0.755px;-webkit-text-stroke:0.12px #333;">4000</div>
<svg class="a" style="left:524.5px;top:427.10px" width="8.5" height="11" viewBox="0 0 8 10"><rect x="0" y="1.3" width="8" height="1.3" fill="#5b83b8"/><rect x="2.7" y="0" width="2.6" height="1.3" fill="#5b83b8"/><path d="M0.8 3.2 H7.2 L6.7 10 H1.3 Z" fill="#6f95c6"/><path d="M2.8 4 V9 M4 4 V9 M5.2 4 V9" stroke="#c8d8ec" stroke-width="0.5"/></svg>
<div class="t" style="left:554.40px;top:428.40px;font-size:9.80px;color:#b8262b;font-weight:bold;font-family:'Liberation Sans',sans-serif;letter-spacing:0.183px;-webkit-text-stroke:0.15px #b8262b;">Deslocando Para Origem</div>
<div class="t" style="left:689.00px;top:428.46px;font-size:9.50px;color:#c0282d;font-weight:normal;font-family:'Liberation Sans',sans-serif;letter-spacing:0.717px;-webkit-text-stroke:0.12px #c0282d;">00:04:45</div>
<svg class="a" style="left:253.3px;top:418.40px" width="10" height="10" viewBox="0 0 10 10"><path d="M5 0 L6.5 3.5 L10 5 L6.5 6.5 L5 10 L3.5 6.5 L0 5 L3.5 3.5 Z" fill="#c0282d"/></svg>
<div class="t" style="left:271.80px;top:419.66px;font-size:9.60px;color:#c0282d;font-weight:normal;font-family:'Liberation Serif',serif;letter-spacing:-0.55px;">119:02:42</div>
<div class="a" style="left:323.70px;top:418.00px;width:63.90px;height:16.10px;background:#56ad56;border-radius:3px;border:1px solid #4c9f4c;box-sizing:border-box"></div>
<svg class="a" style="left:329.5px;top:422.20px" width="7" height="8" viewBox="0 0 7 8"><path d="M0 0 L7 4 L0 8Z" fill="#fff"/></svg>
<div class="t" style="left:340.20px;top:421.26px;font-size:9.50px;color:#fff;font-weight:normal;font-family:'Liberation Sans',sans-serif;letter-spacing:0.026px;-webkit-text-stroke:0.1px #fff;">Requisitar</div>
<svg class="a" style="left:820.6px;top:126.8px" width="9.5" height="9.5" viewBox="0 0 10 10"><circle cx="5" cy="5" r="4.1" fill="none" stroke="#222" stroke-width="1.5"/><path d="M5 2.4 V5.3 H7.2" stroke="#222" stroke-width="1.3" fill="none"/></svg>
<div class="t" style="left:833.70px;top:126.18px;font-size:10.54px;color:#222;font-weight:bold;font-family:'Liberation Sans',sans-serif;">31/05/2017 12:43:45</div>
<div class="a" style="left:763.80px;top:149.00px;width:226.00px;height:146.00px;background:#fff;border:1px solid #dcdcdc;border-radius:3px;box-sizing:border-box"></div>
<div class="a" style="left:764.80px;top:150.00px;width:224.00px;height:43.40px;background:linear-gradient(#f5f5f5,#e6e6e6);border-bottom:1px solid #dcdcdc;border-radius:2px 2px 0 0;box-sizing:border-box"></div>
<div class="t" style="left:818.30px;top:163.91px;font-size:13.10px;color:#333;font-weight:normal;font-family:'Liberation Sans',sans-serif;">Ramais Disponíveis</div>
<div class="t" style="left:778.90px;top:222.31px;font-size:9.20px;color:#333;font-weight:bold;font-family:'Liberation Sans',sans-serif;letter-spacing:-0.420px;">Nome</div>
<div class="t" style="left:832.60px;top:222.31px;font-size:9.20px;color:#333;font-weight:bold;font-family:'Liberation Sans',sans-serif;letter-spacing:-0.303px;">Ramal</div>
<div class="t" style="left:867.00px;top:210.61px;font-size:9.20px;color:#333;font-weight:bold;font-family:'Liberation Sans',sans-serif;letter-spacing:-0.355px;">Tempo sem</div>
<div class="t" style="left:867.00px;top:222.31px;font-size:9.20px;color:#333;font-weight:bold;font-family:'Liberation Sans',sans-serif;letter-spacing:-0.237px;">Movimentação</div>
<div class="t" style="left:942.90px;top:210.61px;font-size:9.20px;color:#333;font-weight:bold;font-family:'Liberation Sans',sans-serif;letter-spacing:-0.364px;">Último</div>
<div class="t" style="left:942.90px;top:222.31px;font-size:9.20px;color:#333;font-weight:bold;font-family:'Liberation Sans',sans-serif;letter-spacing:-0.389px;">Lugar</div>
<div class="a" style="left:775.00px;top:235.30px;width:202.50px;height:2.00px;background:#dddddd;"></div>
<div class="a" style="left:775.00px;top:237.30px;width:202.50px;height:31.50px;background:#f9f9f9;"></div>
<div class="t" style="left:778.90px;top:242.06px;font-size:9.50px;color:#333;font-weight:normal;font-family:'Liberation Sans',sans-serif;letter-spacing:0.163px;-webkit-text-stroke:0.12px #333;">Norberto</div>
<div class="t" style="left:778.90px;top:254.06px;font-size:9.50px;color:#333;font-weight:normal;font-family:'Liberation Sans',sans-serif;letter-spacing:0.192px;-webkit-text-stroke:0.12px #333;">Simoni</div>
<div class="t" style="left:832.60px;top:242.06px;font-size:9.50px;color:#333;font-weight:normal;font-family:'Liberation Sans',sans-serif;letter-spacing:0.455px;-webkit-text-stroke:0.12px #333;">4001</div>
<div class="t" style="left:867.00px;top:242.06px;font-size:9.50px;color:#333;font-weight:normal;font-family:'Liberation Sans',sans-serif;letter-spacing:0.717px;-webkit-text-stroke:0.12px #333;">00:00:07</div>
<div class="t" style="left:942.90px;top:242.06px;font-size:9.50px;color:#333;font-weight:normal;font-family:'Liberation Sans',sans-serif;letter-spacing:0.263px;-webkit-text-stroke:0.12px #333;">301N</div>
<div class="a" id="foot"></div>
<div class="t" style="left:415.00px;top:524.51px;font-size:10.50px;color:#fff;font-weight:normal;font-family:'Liberation Sans',sans-serif;">Desenvolvido por Voice Technology Ltda.©</div>
<div class="a" style="left:0.00px;top:536.00px;width:1006.00px;height:30.00px;background:#191919;"></div>
<div class="a" style="left:0.00px;top:535.40px;width:1006.00px;height:2.00px;background:#213a58;"></div>
<div class="a" style="left:0.00px;top:537.40px;width:36.50px;height:28.60px;background:#121212;"></div>
<div class="a" style="left:36.50px;top:537.40px;width:252.70px;height:28.60px;background:#262626;"></div>
<div class="a" style="left:434.80px;top:537.40px;width:35.00px;height:28.60px;background:#353535;"></div>
<svg class="a" style="left:12.5px;top:544.6px" width="12.5" height="12" viewBox="0 0 12.5 12"><path d="M0 1.7 L5.3 1 V5.6 H0Z M6 0.9 L12.5 0 V5.6 H6Z M0 6.3 H5.3 V11 L0 10.3Z M6 6.3 H12.5 V12 L6 11.1Z" fill="#fff"/></svg>
<svg class="a" style="left:43.4px;top:543px" width="16" height="16" viewBox="0 0 16 16"><circle cx="8" cy="8" r="6.8" fill="none" stroke="#e8e8e8" stroke-width="1.8"/></svg>
<div class="t" style="left:66.40px;top:546.09px;font-size:11.00px;color:#8e8e8e;font-weight:normal;font-family:'Liberation Sans',sans-serif;">Digite aqui para pesquisar</div>
<svg class="a" style="left:270px;top:543.5px" width="9" height="13" viewBox="0 0 9 13"><rect x="2.5" y="0.5" width="4" height="8" rx="2" fill="#6a6a6a"/><path d="M1 6 Q1 10 4.5 10 Q8 10 8 6 M4.5 10 V12.5" stroke="#6a6a6a" stroke-width="1" fill="none"/></svg>
<svg class="a" style="left:299px;top:545.5px" width="16" height="11" viewBox="0 0 16 11"><rect x="3" y="0.7" width="10" height="9.6" rx="1" fill="none" stroke="#ddd" stroke-width="1.2"/><path d="M0.7 2.5 V8.5 M15.3 2.5 V8.5" stroke="#ddd" stroke-width="1.2"/></svg>
<svg class="a" style="left:335.6px;top:543.6px" width="17" height="14" viewBox="0 0 17 14"><path d="M0 1 H6 L7.5 2.5 H17 V14 H0Z" fill="#f3c553"/><rect x="0" y="4" width="17" height="10" fill="#fbd675"/><rect x="5" y="8" width="7" height="6" fill="#3d8ad6"/><rect x="6.5" y="10" width="4" height="4" fill="#fbd675"/></svg>
<svg class="a" style="left:373px;top:543px" width="15" height="15" viewBox="0 0 15 15"><path d="M14.5 9 H4 Q4.5 12.5 8.5 12.5 Q11.5 12.5 14 11 V14 Q11.5 15 8.5 15 Q1 15 1 8 Q1 1 8.5 1 Q14.5 1 14.5 7.5Z M4.2 6.5 H11 Q10.7 3.5 7.8 3.5 Q5 3.5 4.2 6.5Z" fill="#1e78d8"/></svg>
<svg class="a" style="left:408px;top:541.5px" width="16" height="16" viewBox="0 0 16 16"><path d="M5 4 V2.5 Q5 0.7 8 0.7 Q11 0.7 11 2.5 V4" stroke="#fff" stroke-width="1" fill="none"/><path d="M0.5 4 H15.5 V15.5 H0.5Z" fill="#fff"/><path d="M4.5 6.8 L7.6 6.4 V9.5 H4.5Z M8.3 6.3 L11.5 5.9 V9.5 H8.3Z M4.5 10.2 H7.6 V13.3 L4.5 12.9Z M8.3 10.2 H11.5 V13.8 L8.3 13.4Z" fill="#202020"/></svg>
<svg class="a" style="left:443.7px;top:542.5px" width="17" height="17" viewBox="0 0 17 17"><circle cx="8.5" cy="8.5" r="8" fill="#dd4b3e"/><path d="M8.5 8.5 L1.6 4.5 A8 8 0 0 0 4.5 15.4Z" fill="#1da462"/><path d="M8.5 8.5 L4.5 15.4 A8 8 0 0 0 16.5 8.5 Z" fill="#ffcd40"/><path d="M8.5 4.5 H15.5 A8 8 0 0 1 16.5 8.5 L12 8.5Z" fill="#ffcd40"/><circle cx="8.5" cy="8.5" r="3.9" fill="#fff"/><circle cx="8.5" cy="8.5" r="3" fill="#4a8af4"/></svg>
<svg class="a" style="left:479px;top:541.5px" width="25" height="17" viewBox="0 0 25 17"><path d="M0.5 6 L9 0.5 L17.5 6 V14 H0.5Z" fill="#f2f2f2"/><path d="M0.5 6 L9 10.5 L17.5 6" stroke="#333" stroke-width="1" fill="none"/><circle cx="19" cy="12" r="4.6" fill="#2a2a2a" stroke="#999" stroke-width="0.8"/><path d="M18.3 10 L19.5 9.3 V14.5" stroke="#fff" stroke-width="1.1" fill="none"/></svg>
<svg class="a" style="left:515.5px;top:542px" width="20" height="18" viewBox="0 0 20 18"><circle cx="9" cy="8" r="8" fill="#2aa3e6"/><text x="9" y="12.5" text-anchor="middle" font-family="Liberation Sans" font-weight="bold" font-size="12" fill="#fff">S</text><circle cx="15.5" cy="14.5" r="2.7" fill="#f59a2d" stroke="#202020" stroke-width="0.8"/></svg>
<svg class="a" style="left:551.5px;top:542px" width="17" height="16" viewBox="0 0 17 16"><path d="M1 1 H6 V4 H11 V1 H16 V6 H13 V10 H16 V15 H11 V12 H6 V15 H1 V10 H4 V6 H1Z" fill="#e8b830"/><rect x="6" y="6" width="5" height="4" fill="#c58f10"/></svg>
<svg class="a" style="left:587.5px;top:542px" width="17" height="16" viewBox="0 0 17 16"><path d="M3 1 H16 L13 15 H0Z" fill="#9fd2e6"/><path d="M3 1 H16 L15.5 3.5 H2.5Z" fill="#6aaac6"/><path d="M2 13 H13" stroke="#4a8aa8" stroke-width="1"/></svg>
<svg class="a" style="left:623px;top:541.5px" width="18" height="17" viewBox="0 0 18 17"><path d="M8 2 Q1 2 1 8.5 Q1 15 8 15 Q10 15 10 13 Q9 11 11 11 Q15 11 15 7 Q14 2 8 2Z" fill="#e8e4d8"/><circle cx="5" cy="7" r="1.4" fill="#e44"/><circle cx="8" cy="5" r="1.4" fill="#3a6"/><circle cx="11" cy="6" r="1.4" fill="#36c"/><circle cx="4.8" cy="10.5" r="1.4" fill="#fc3"/><path d="M16.5 0.5 L9.5 13" stroke="#d98c2a" stroke-width="1.6"/></svg>
<div class="a" style="left:365.90px;top:563.60px;width:28.60px;height:2.40px;background:#76b4ec;"></div>
<div class="a" style="left:434.80px;top:563.60px;width:35.00px;height:2.40px;background:#76b4ec;"></div>
<div class="a" style="left:510.00px;top:563.60px;width:28.70px;height:2.40px;background:#76b4ec;"></div>
<div class="a" style="left:545.60px;top:563.60px;width:29.20px;height:2.40px;background:#76b4ec;"></div>
<div class="a" style="left:582.00px;top:563.60px;width:28.70px;height:2.40px;background:#76b4ec;"></div>
<div class="a" style="left:618.00px;top:563.60px;width:29.30px;height:2.40px;background:#76b4ec;"></div>
<svg class="a" style="left:793.5px;top:539px" width="24.5" height="24" viewBox="0 0 24.5 24"><circle cx="12.25" cy="12" r="11.2" fill="#2b8fd6" stroke="#fff" stroke-width="1.5"/><text x="12.25" y="18.3" text-anchor="middle" font-family="Liberation Sans" font-weight="bold" font-size="17" fill="#fff">?</text></svg>
<svg class="a" style="left:821.5px;top:547.5px" width="10" height="6" viewBox="0 0 10 6"><path d="M0.7 5.5 L5 1 L9.3 5.5" stroke="#ddd" stroke-width="1.1" fill="none"/></svg>
<svg class="a" style="left:839.5px;top:547px" width="11" height="10" viewBox="0 0 11 10"><path d="M0.5 9.5 A9 9 0 0 1 9.5 0.5 M3 9.5 A6.5 6.5 0 0 1 9.5 3 M5.5 9.5 A4 4 0 0 1 9.5 5.5" stroke="#bbb" stroke-width="0.9" fill="none"/><circle cx="9.3" cy="9.3" r="1" fill="#ddd"/></svg>
<svg class="a" style="left:855px;top:547px" width="13" height="10" viewBox="0 0 13 10"><path d="M1 0 V3 M3 0 V3 M0.5 3 H3.5 V5 Q2 6 2 8 V10" stroke="#ddd" stroke-width="0.9" fill="none"/><rect x="4.5" y="3" width="8" height="6" fill="#ddd"/></svg>
<svg class="a" style="left:872.5px;top:546.5px" width="12" height="11" viewBox="0 0 12 11"><path d="M0.5 3.5 H3 L6.5 0.5 V10.5 L3 7.5 H0.5Z" stroke="#ddd" stroke-width="0.9" fill="none"/><path d="M8 3.5 Q9.3 5.5 8 7.5 M9.8 1.8 Q12.2 5.5 9.8 9.2" stroke="#ddd" stroke-width="0.9" fill="none"/></svg>
<div class="t" style="left:892.40px;top:540.64px;font-size:8.10px;color:#f2f2f2;font-weight:normal;font-family:'Liberation Sans',sans-serif;-webkit-text-stroke:0.2px #f2f2f2;">POR</div>
<div class="t" style="left:892.80px;top:553.27px;font-size:8.30px;color:#f2f2f2;font-weight:normal;font-family:'Liberation Sans',sans-serif;-webkit-text-stroke:0.2px #f2f2f2;">PTB</div>
<div class="t" style="left:930.60px;top:540.90px;font-size:7.80px;color:#f2f2f2;font-weight:normal;font-family:'Liberation Sans',sans-serif;letter-spacing:0.15px;-webkit-text-stroke:0.2px #f2f2f2;">14:43</div>
<div class="t" style="left:918.90px;top:553.10px;font-size:8.50px;color:#f2f2f2;font-weight:normal;font-family:'Liberation Sans',sans-serif;-webkit-text-stroke:0.2px #f2f2f2;">31/05/2017</div>
<svg class="a" style="left:974px;top:544.5px" width="13.5" height="13" viewBox="0 0 13.5 13"><path d="M0.6 0.6 H12.9 V9.3 H8 L6 12 L4.6 9.3 H0.6Z" stroke="#ddd" stroke-width="1.1" fill="none"/></svg>
<div class="a" style="left:1000.50px;top:536.00px;width:5.50px;height:30.00px;background:#cdd6e2;"></div>
</body></html>
